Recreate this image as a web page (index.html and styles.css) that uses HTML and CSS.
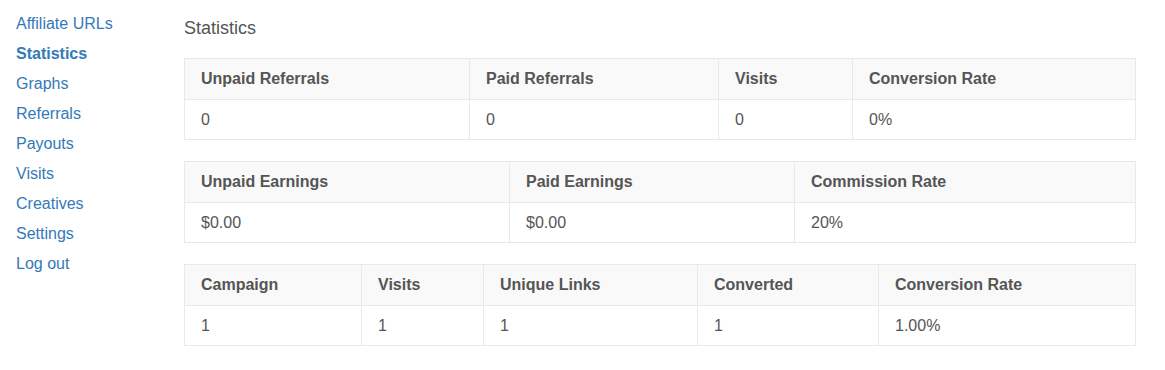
FILE: index.html
```html
<!DOCTYPE html>
<html lang="en">
<head>
  <meta charset="UTF-8" />
  <title>Affiliate Area - Statistics</title>
  <link rel="stylesheet" href="styles.css">
</head>
<body>
  <div class="layout">
    <ul class="tabs">
      <li><a href="#">Affiliate URLs</a></li>
      <li class="active"><a href="#">Statistics</a></li>
      <li><a href="#">Graphs</a></li>
      <li><a href="#">Referrals</a></li>
      <li><a href="#">Payouts</a></li>
      <li><a href="#">Visits</a></li>
      <li><a href="#">Creatives</a></li>
      <li><a href="#">Settings</a></li>
      <li><a href="#">Log out</a></li>
    </ul>

    <div class="content">
      <h4 class="title">Statistics</h4>

      <table class="stats stats-referrals">
        <thead>
          <tr>
            <th>Unpaid Referrals</th>
            <th>Paid Referrals</th>
            <th>Visits</th>
            <th>Conversion Rate</th>
          </tr>
        </thead>
        <tbody>
          <tr>
            <td>0</td>
            <td>0</td>
            <td>0</td>
            <td>0%</td>
          </tr>
        </tbody>
      </table>

      <table class="stats stats-earnings">
        <thead>
          <tr>
            <th>Unpaid Earnings</th>
            <th>Paid Earnings</th>
            <th>Commission Rate</th>
          </tr>
        </thead>
        <tbody>
          <tr>
            <td>$0.00</td>
            <td>$0.00</td>
            <td>20%</td>
          </tr>
        </tbody>
      </table>

      <table class="stats stats-campaigns">
        <thead>
          <tr>
            <th>Campaign</th>
            <th>Visits</th>
            <th>Unique Links</th>
            <th>Converted</th>
            <th>Conversion Rate</th>
          </tr>
        </thead>
        <tbody>
          <tr>
            <td>1</td>
            <td>1</td>
            <td>1</td>
            <td>1</td>
            <td>1.00%</td>
          </tr>
        </tbody>
      </table>
    </div>
  </div>
</body>
</html>
```

FILE: styles.css
```css
body {
  margin: 0;
  background: #fff;
  color: #555;
  font-family: "Liberation Sans", Arial, sans-serif;
  font-size: 16px;
  line-height: 20px;
}
.layout {
  display: flex;
  padding-top: 9px;
}
.tabs {
  list-style: none;
  margin: 0;
  padding: 0 0 0 16px;
  width: 168px;
  flex-shrink: 0;
}
.tabs li {
  padding: 5px 0;
}
.tabs a {
  color: #337ab7;
  text-decoration: none;
}
.tabs .active a {
  font-weight: bold;
}
.content {
  width: 952px;
}
.title {
  margin: 9px 0 20px;
  font-size: 18px;
  font-weight: normal;
  color: #555;
}
.stats {
  width: 100%;
  border-collapse: collapse;
  table-layout: fixed;
  margin-bottom: 21px;
  border: 1px solid #e9e9e9;
}
.stats th,
.stats td {
  box-sizing: border-box;
  text-align: left;
  padding: 10px 16px 9px;
  border: 1px solid #e9e9e9;
}
.stats th {
  background: #f9f9f9;
  font-weight: bold;
  padding: 10px 16px 10px;
}
.stats-referrals th:nth-child(1) { width: 285px; }
.stats-referrals th:nth-child(2) { width: 249px; }
.stats-referrals th:nth-child(3) { width: 134px; }
.stats-earnings th:nth-child(1) { width: 325px; }
.stats-earnings th:nth-child(2) { width: 285px; }
.stats-campaigns th:nth-child(1) { width: 177px; }
.stats-campaigns th:nth-child(2) { width: 122px; }
.stats-campaigns th:nth-child(3) { width: 214px; }
.stats-campaigns th:nth-child(4) { width: 181px; }
```
